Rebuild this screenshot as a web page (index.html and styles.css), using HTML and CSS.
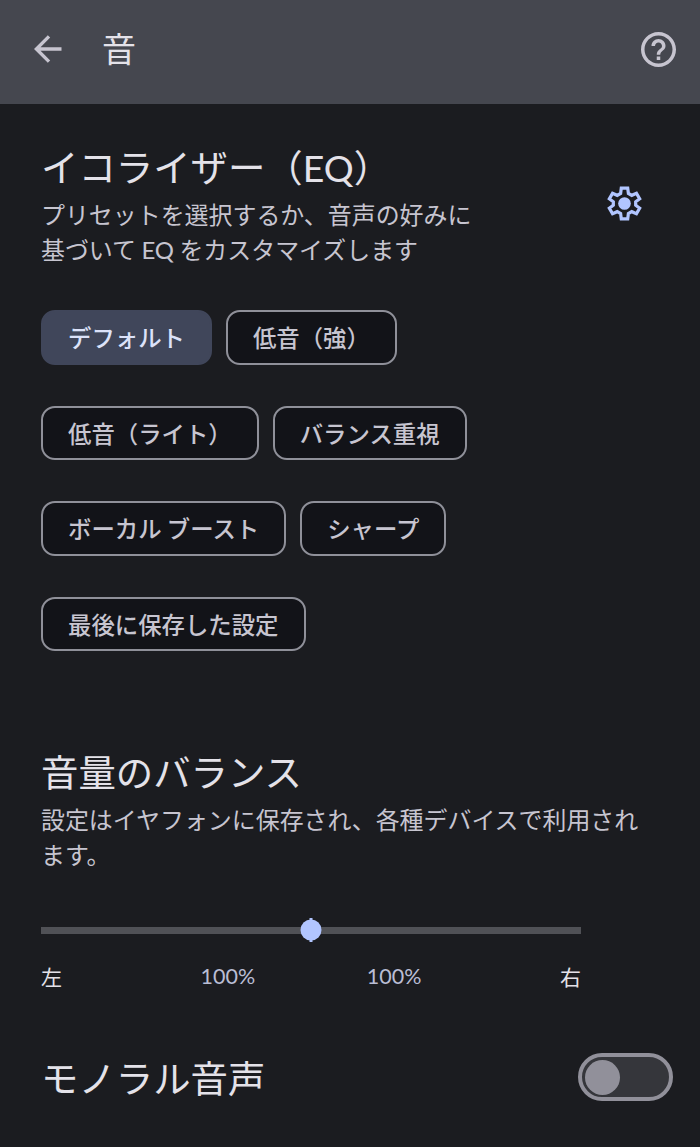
FILE: index.html
```html
<!DOCTYPE html>
<html lang="ja">

<head>
    <meta charset="UTF-8">
    <title>音</title>
    <link rel="stylesheet" href="styles.css">
</head>

<body>

    <header class="topbar">
        <svg class="back" viewBox="0 0 28 28" fill="none" stroke="currentColor" stroke-width="3.4">
            <path d="M27.5 14H3M15 1.4L2.4 14L15 26.6" />
        </svg>
        <h1>音</h1>
        <svg class="help" viewBox="2 2 20 20" fill="currentColor">
            <path d="M11 18h2v-2h-2v2zm1-16C6.480 2 2 6.480 2 12s4.480 10 10 10 10-4.480 10-10S17.520 2 12 2zm0 18c-4.410 0-8-3.590-8-8s3.590-8 8-8 8 3.590 8 8-3.590 8-8 8zm0-14c-2.210 0-4 1.790-4 4h2c0-1.100.9-2 2-2s2 .9 2 2c0 2-3 1.750-3 5h2c0-2.250 3-2.500 3-5 0-2.210-1.790-4-4-4z" />
        </svg>
    </header>

    <main>
        <section class="equalizer">
            <div class="eq-head">
                <div class="eq-text">
                    <h2>イコライザー（<span class="latin">EQ</span>）</h2>
                    <p>プリセットを選択するか、音声の好みに<br>基づいて <span class="latin">EQ</span> をカスタマイズします</p>
                </div>
                <svg class="gear" viewBox="0 0 36 36" fill="none" stroke="currentColor" stroke-width="3.3">
                    <path d="M14.700 2.200H21.300L22 7.600L25.500 9.600L30.300 7.500L33.600 13.200L29.500 16.200V19.800L33.600 22.800L30.300 28.500L25.500 26.400L22 28.400L21.300 33.800H14.700L14 28.400L10.500 26.400L5.700 28.500L2.400 22.800L6.500 19.800V16.200L2.400 13.200L5.700 7.500L10.500 9.600L14 7.600Z" />
                    <circle cx="18" cy="18" r="6.500" fill="currentColor" stroke="none" />
                </svg>
            </div>

            <div class="chips">
                <button class="chip selected">デフォルト</button>
                <button class="chip">低音（強）</button>
                <button class="chip">低音（ライト）</button>
                <button class="chip">バランス重視</button>
                <button class="chip">ボーカル ブースト</button>
                <button class="chip">シャープ</button>
                <button class="chip">最後に保存した設定</button>
            </div>
        </section>

        <section class="balance">
            <h2>音量のバランス</h2>
            <p>設定はイヤフォンに保存され、各種デバイスで利用され<br>ます。</p>
            <div class="slider">
                <div class="track"></div>
                <div class="tick"></div>
                <div class="thumb"></div>
            </div>
            <div class="labels">
                <span class="side">左</span>
                <div class="percents">
                    <span>100%</span>
                    <span>100%</span>
                </div>
                <span class="side">右</span>
            </div>
        </section>

        <section class="mono">
            <h2>モノラル音声</h2>
            <div class="switch">
                <div class="knob"></div>
            </div>
        </section>
    </main>

</body>

</html>
```

FILE: styles.css
```css
* {
    box-sizing: border-box;
}

body {
    margin: 0;
    height: 1147px;
    overflow: hidden;
    background-color: #1b1c20;
    color: #e4e2e9;
    font-family: 'Noto Sans CJK JP', sans-serif;
}

h1,
h2,
p {
    margin: 0;
    font-weight: 400;
    white-space: nowrap;
}

.topbar {
    display: flex;
    align-items: center;
    height: 104px;
    padding: 0 24px 6px 34px;
    background-color: #45474f;
    color: #c7c5d0;
}

.topbar h1 {
    margin: -2px 0 0 40px;
    font-size: 34px;
    line-height: 50px;
    color: #e4e2e9;
}

.back {
    width: 28px;
    height: 28px;
}

.help {
    width: 35px;
    height: 35px;
    margin-left: auto;
}

main {
    padding: 37px 27px 0 41px;
}

h2 {
    font-size: 37.4px;
    line-height: 50px;
}

p {
    margin-top: 5px;
    font-size: 23.95px;
    line-height: 35px;
    color: #c7c5d0;
}

.latin {
    font-family: Lato, sans-serif;
    line-height: 1;
}

.eq-head {
    display: flex;
    justify-content: space-between;
    align-items: center;
    height: 125px;
    padding-right: 31px;
}

.gear {
    width: 35px;
    height: 35px;
    color: #b1c5ff;
}

.chips {
    display: flex;
    flex-wrap: wrap;
    gap: 41px 14px;
    width: 540px;
    margin-top: 44px;
}

.chip {
    height: 54.5px;
    padding: 0 25px;
    border: 2px solid #8f9099;
    border-radius: 14px;
    background-color: #121318;
    color: #c7c5d0;
    font-family: inherit;
    font-size: 23.4px;
    font-weight: 500;
    line-height: 50px;
    white-space: nowrap;
}

.chip.selected {
    border-color: #40465a;
    background-color: #40465a;
    color: #dce2f9;
}

.balance {
    margin-top: 95px;
}

.slider {
    position: relative;
    display: flex;
    align-items: center;
    width: 540px;
    height: 24px;
    margin-top: 47px;
}

.track {
    width: 100%;
    height: 7px;
    background-color: #505156;
}

.tick,
.thumb {
    position: absolute;
    left: 50%;
    top: 50%;
    transform: translate(-50%, -50%);
    background-color: #b1c5ff;
}

.tick {
    width: 3px;
    height: 24px;
}

.thumb {
    width: 21px;
    height: 21px;
    border-radius: 50%;
}

.labels {
    display: flex;
    justify-content: space-between;
    width: 540px;
    margin-top: 18px;
    font-size: 21px;
    line-height: 32px;
}

.percents {
    display: flex;
    justify-content: space-between;
    width: 221px;
    font-family: Lato, sans-serif;
    font-size: 21.5px;
    color: #b9bdd4;
}

.mono {
    display: flex;
    justify-content: space-between;
    align-items: center;
    margin-top: 60px;
}

.switch {
    display: flex;
    align-items: center;
    width: 95px;
    height: 48px;
    padding-left: 3px;
    border: 4px solid #91909a;
    border-radius: 24px;
    background-color: #35363b;
}

.knob {
    width: 35px;
    height: 35px;
    border-radius: 50%;
    background-color: #91909a;
}
```
